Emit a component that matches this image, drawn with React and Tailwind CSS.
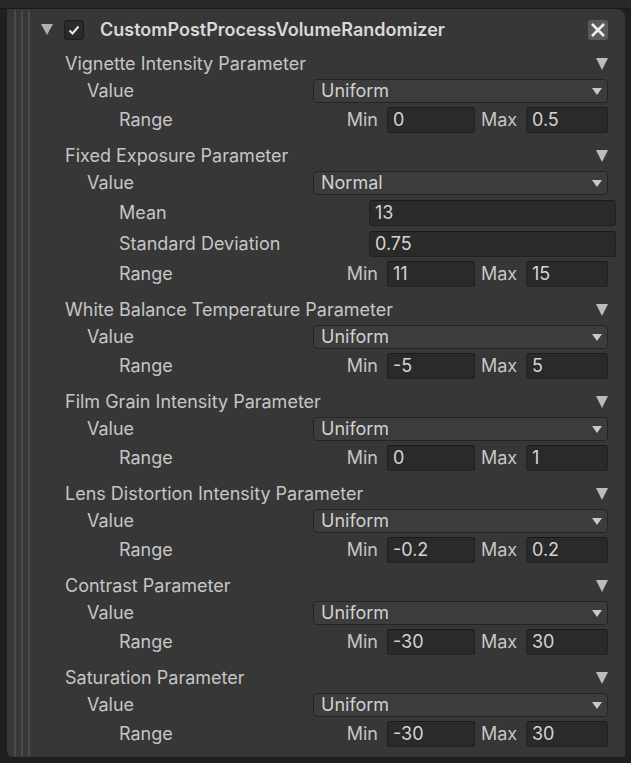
const params = [
  { name: 'Vignette Intensity Parameter', dist: 'Uniform', min: '0', max: '0.5' },
  { name: 'Fixed Exposure Parameter', dist: 'Normal', mean: '13', std: '0.75', min: '11', max: '15' },
  { name: 'White Balance Temperature Parameter', dist: 'Uniform', min: '-5', max: '5' },
  { name: 'Film Grain Intensity Parameter', dist: 'Uniform', min: '0', max: '1' },
  { name: 'Lens Distortion Intensity Parameter', dist: 'Uniform', min: '-0.2', max: '0.2' },
  { name: 'Contrast Parameter', dist: 'Uniform', min: '-30', max: '30' },
  { name: 'Saturation Parameter', dist: 'Uniform', min: '-30', max: '30' },
]

function Field({ value, className }) {
  return (
    <div className={`h-[26px] bg-[#2a2a2a] border border-[#212121] border-t-[#1a1a1a] rounded-[3px] flex items-center pl-[5px] text-[#d4d4d4] ${className}`}>
      {value}
    </div>
  )
}

function Dropdown({ value }) {
  return (
    <div className="w-[295px] h-[24px] bg-[#3c3c3c] border border-[#242424] rounded-[4px] flex items-center justify-between pl-[7px] pr-[5px] text-[#d0d0d0]">
      <span>{value}</span>
      <svg width="10" height="7" viewBox="0 0 10 7"><polygon points="0,0 10,0 5,7" fill="#c8c8c8" /></svg>
    </div>
  )
}

function RangeRow({ min, max }) {
  return (
    <div className="h-[30px] flex items-center">
      <span className="pl-[54px] flex-1">Range</span>
      <span className="w-[47px] text-right pr-[9px]">Min</span>
      <Field value={min} className="w-[88px]" />
      <span className="w-[51px] pl-[6px]">Max</span>
      <Field value={max} className="w-[82px] mr-[17px]" />
    </div>
  )
}

function ParamGroup({ p }) {
  return (
    <div className="mb-[8px]">
      <div className="h-[26px] flex items-center justify-between pr-[17px]">
        <span>{p.name}</span>
        <svg width="12" height="12" viewBox="0 0 12 12"><polygon points="0,0 12,0 6,12" fill="#bcbcbc" /></svg>
      </div>
      <div className="h-[28px] flex items-center">
        <span className="pl-[22px] flex-1">Value</span>
        <div className="mr-[17px]"><Dropdown value={p.dist} /></div>
      </div>
      {p.mean && (
        <>
          <div className="h-[31px] flex items-center">
            <span className="pl-[54px] flex-1">Mean</span>
            <Field value={p.mean} className="w-[247px] mr-[9px]" />
          </div>
          <div className="h-[31px] flex items-center">
            <span className="pl-[54px] flex-1">Standard Deviation</span>
            <Field value={p.std} className="w-[247px] mr-[9px]" />
          </div>
        </>
      )}
      <RangeRow min={p.min} max={p.max} />
    </div>
  )
}

export default function App() {
  return (
    <div className="w-[631px] h-[763px] bg-[#1f1f1f] overflow-hidden text-[18px] leading-[22px] text-[#c6c6c6]" style={{ fontFamily: 'Inter, "Noto Sans", sans-serif' }}>
      <div className="h-[9px] bg-[#292929] border-b border-[#191919]" />
      <div className="ml-[7px] mr-[6px] h-[748px] bg-[#373737] rounded-tr-[8px] rounded-bl-[6px] flex">
        {/* indent guides */}
        <div className="flex gap-[5px] pl-[7px] pt-[1px] pb-[1px] w-[34px] shrink-0">
          <div className="w-[2px] bg-[#4b4b4b]" />
          <div className="w-[2px] bg-[#4b4b4b]" />
          <div className="w-[2px] bg-[#4b4b4b]" />
        </div>
        <div className="flex-1 flex flex-col">
          <div className="h-[42px] pb-[1px] flex items-center">
            <svg width="12" height="12" viewBox="0 0 12 12"><polygon points="0,0 12,0 6,11" fill="#b0b0b0" /></svg>
            <div className="ml-[11px] w-[20px] h-[20px] bg-[#2a2a2a] border border-[#1b1b1b] rounded-[3px] flex items-center justify-center">
              <svg width="12" height="10" viewBox="0 0 12 10"><polyline points="1.5,5.5 4.5,8.5 10.5,1.5" fill="none" stroke="#ececec" strokeWidth="2" /></svg>
            </div>
            <span className="ml-[16px] flex-1 font-semibold text-[#d8d8d8]">CustomPostProcessVolumeRandomizer</span>
            <div className="mr-[17px] w-[20px] h-[20px] bg-[#5a5a5a] rounded-[3px] flex items-center justify-center">
              <svg width="16" height="16" viewBox="0 0 16 16"><path d="M2 2 L14 14 M14 2 L2 14" stroke="#ededed" strokeWidth="2.6" /></svg>
            </div>
          </div>
          <div className="pl-[24px]">
            {params.map(p => <ParamGroup key={p.name} p={p} />)}
          </div>
        </div>
      </div>
    </div>
  )
}
